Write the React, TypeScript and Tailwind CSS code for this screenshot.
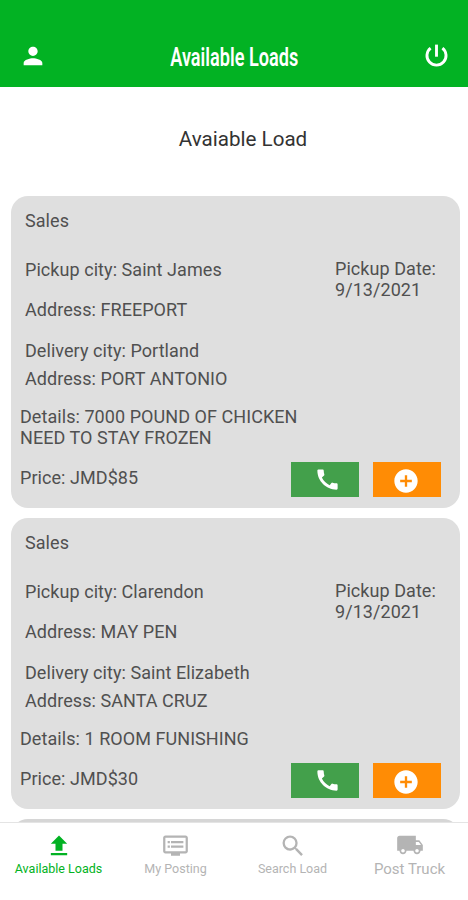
import React from 'react';
import {
  MdAddCircle,
  MdCall,
  MdDvr,
  MdFileUpload,
  MdLocalShipping,
  MdPerson,
  MdSearch,
} from 'react-icons/md';

interface Load {
  id: number;
  category: string;
  pickupCity: string;
  pickupAddress: string;
  deliveryCity: string;
  deliveryAddress: string;
  details: string;
  price: number;
  pickupDate: string;
}

const LOADS: Load[] = [
  {
    id: 1,
    category: 'Sales',
    pickupCity: 'Saint James',
    pickupAddress: 'FREEPORT',
    deliveryCity: 'Portland',
    deliveryAddress: 'PORT ANTONIO',
    details: '7000 POUND OF CHICKEN NEED TO STAY FROZEN',
    price: 85,
    pickupDate: '9/13/2021',
  },
  {
    id: 2,
    category: 'Sales',
    pickupCity: 'Clarendon',
    pickupAddress: 'MAY PEN',
    deliveryCity: 'Saint Elizabeth',
    deliveryAddress: 'SANTA CRUZ',
    details: '1 ROOM FUNISHING',
    price: 30,
    pickupDate: '9/13/2021',
  },
];

const PowerIcon: React.FC = () => (
  <svg
    width="29"
    height="29"
    viewBox="0 0 24 24"
    fill="none"
    stroke="currentColor"
    strokeWidth="2.4"
  >
    <path d="M12 3v10" />
    <path d="M7.1 5.9a7.9 7.9 0 1 0 9.8 0" />
  </svg>
);

const Header: React.FC = () => (
  <header className="flex h-[87px] shrink-0 items-start justify-between bg-[#02b223] px-[19px] pt-[41px] text-white">
    <button className="pt-px">
      <MdPerson size={28} />
    </button>
    <h1 className="origin-center scale-x-[0.725] pt-px text-[25px] font-semibold leading-[32px] whitespace-nowrap">
      Available Loads
    </h1>
    <button className="-mr-0.5">
      <PowerIcon />
    </button>
  </header>
);

const LoadCard: React.FC<{ load: Load }> = ({ load }) => (
  <article className="rounded-[17px] bg-[#dfdfdf] pt-[14px] pr-[19px] pb-[11px] pl-[9px] text-[18px] leading-[21px] tracking-[0.06px] text-[#505050]">
    <p className="pl-[5px]">{load.category}</p>
    <div className="mt-7 flex justify-between pl-[5px]">
      <div>
        <p>{`Pickup city: ${load.pickupCity}`}</p>
        <p className="mt-[19px]">{`Address: ${load.pickupAddress}`}</p>
        <p className="mt-5">{`Delivery city: ${load.deliveryCity}`}</p>
        <p className="mt-[7px]">{`Address: ${load.deliveryAddress}`}</p>
      </div>
      <div className="-mt-px w-[106px] whitespace-nowrap">
        <p>Pickup Date:</p>
        <p>{load.pickupDate}</p>
      </div>
    </div>
    <p className="mt-[17px] w-[300px]">{`Details: ${load.details}`}</p>
    <div className="mt-[14px] flex h-[35px] items-center">
      <p className="flex-1 pb-1">{`Price: JMD$${load.price}`}</p>
      <button className="flex h-[35px] w-[68px] items-center justify-center bg-[#43a04b] pl-1 text-white">
        <MdCall size={27} />
      </button>
      <button className="ml-[14px] flex h-[35px] w-[68px] items-center justify-center bg-[#ff8c05] pt-[3px] pr-[3px] text-white">
        <MdAddCircle size={28} />
      </button>
    </div>
  </article>
);

const TabBar: React.FC = () => (
  <nav className="grid h-[78px] shrink-0 grid-cols-4 border-t border-[#e4e4e4] bg-white pt-[9px] text-[12.5px] leading-4 text-[#b4b4b4]">
    <button className="flex flex-col items-center text-[#02b223]">
      <MdFileUpload size={28} />
      <span className="mt-px whitespace-nowrap">Available Loads</span>
    </button>
    <button className="flex flex-col items-center">
      <MdDvr size={27} />
      <span className="mt-0.5">My Posting</span>
    </button>
    <button className="flex flex-col items-center">
      <MdSearch size={28} />
      <span className="mt-px">Search Load</span>
    </button>
    <button className="flex flex-col items-center">
      <MdLocalShipping size={28} className="-mt-px" />
      <span className="mt-0.5 text-[15px]">Post Truck</span>
    </button>
  </nav>
);

const App: React.FC = () => {
  return (
    <div className="flex h-[900px] w-[468px] flex-col overflow-hidden bg-white font-['Roboto',sans-serif]">
      <Header />
      <main className="flex-1 overflow-hidden">
        <h2 className="pt-[38px] pl-[18px] text-center text-[20.6px] leading-[28px] text-[#333333]">
          Avaiable Load
        </h2>
        <div className="mt-[43px] flex flex-col gap-[10px] pr-2 pl-[11px]">
          {LOADS.map((load) => (
            <LoadCard key={load.id} load={load} />
          ))}
          <div className="h-20 rounded-[17px] bg-[#d6d6d6]" />
        </div>
      </main>
      <TabBar />
    </div>
  );
};

export default App;
